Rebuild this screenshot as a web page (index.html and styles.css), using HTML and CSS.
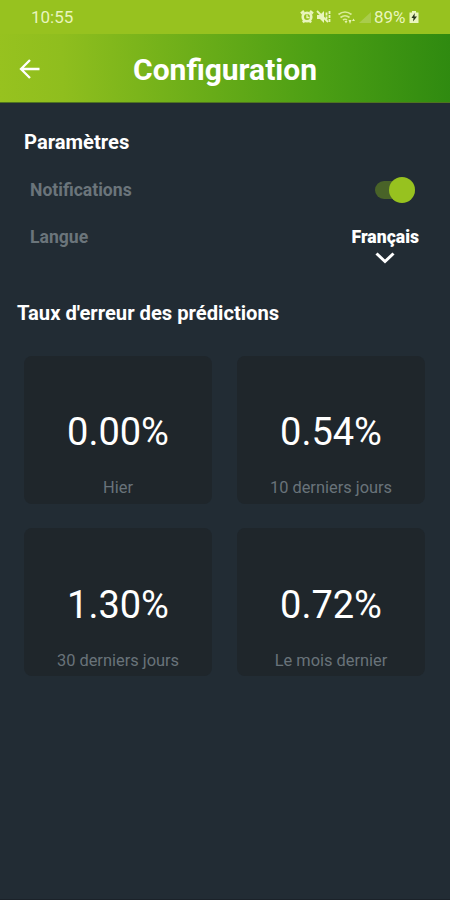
FILE: index.html
```
<!doctype html>
<html lang="fr">
<head>
<meta charset="utf-8">
<title>Configuration</title>
<link rel="stylesheet" href="styles.css">
</head>

<body>
<div class="status">
    <span class="time">10:55</span>
    <svg class="icons" width="72" height="16" viewBox="0 0 72 16">
        <!-- alarm -->
        <path d="M1 4.500L4 2M13 4.500L10 2M3 13.500l1.500-2M11 13.500l-1.500-2" stroke="#e9f5bd" stroke-width="2.400"/>
        <circle cx="7" cy="8" r="4.300" fill="none" stroke="#e9f5bd" stroke-width="2.600"/>
        <path d="M7 5.500V8.500H9.500" fill="none" stroke="#e9f5bd" stroke-width="1.300"/>
        <!-- mute -->
        <path d="M17 6h3l4-4v12l-4-4h-3z" fill="#e9f5bd"/>
        <path d="M17 2l11 11" stroke="#e9f5bd" stroke-width="1.800"/>
        <path d="M26.500 3.500v7M29.500 2v12" stroke="#e9f5bd" stroke-width="1.800" stroke-dasharray="3 1"/>
        <!-- wifi -->
        <path d="M38.500 5.500q6.500-5 13 0M40.500 8.500q4.500-3.500 9 0M43 11q2-1.500 4 0" fill="none" stroke="#d9ec98" stroke-width="1.700"/>
        <path d="M46 14.500l-1.500-2.500h3zM48.500 11l1.500 4 1.500-4zM52 12l1.500-2.500 1.500 2.500z" fill="#e4f2b0"/>
        <!-- signal -->
        <path d="M59 14L71 3v11z" fill="#a9cc4b"/>
    </svg>
    <span class="level">89%</span>
    <svg class="battery" width="10" height="14" viewBox="0 0 10 14">
        <path d="M1 2.500h2V1h4v1.500h2.500V13H.500V2.500z" fill="#e9f5bd"/>
        <path d="M5.800 3L2.500 8h2L4 11.500 8 6.500H5.500z" fill="#26351a"/>
    </svg>
</div>
<div class="header">
    <svg class="back" width="22" height="22" viewBox="0 0 22 22">
        <path d="M20.500 11H2.500M11 2L2 11l9 9" fill="none" stroke="#fff" stroke-width="2.300"/>
    </svg>
    <h1>Configuration</h1>
</div>
<div class="settings">
    <h2>Paramètres</h2>
    <div class="row">
        <span>Notifications</span>
        <div class="switch"><i></i></div>
    </div>
    <div class="row lang">
        <span>Langue</span>
        <div class="select">
            <b>Français</b>
            <svg width="20" height="12" viewBox="0 0 20 12">
                <path d="M1.500 1.500L10 9.500l8.500-8" fill="none" stroke="#fff" stroke-width="3"/>
            </svg>
        </div>
    </div>
</div>
<h2 class="rates">Taux d'erreur des prédictions</h2>
<ul class="cards">
    <li><p>0.00%</p><span>Hier</span></li>
    <li><p>0.54%</p><span>10 derniers jours</span></li>
    <li><p>1.30%</p><span>30 derniers jours</span></li>
    <li><p>0.72%</p><span>Le mois dernier</span></li>
</ul>
</body>
</html>
```

FILE: styles.css
```
* { padding: 0; margin: 0; box-sizing: border-box; }
li { list-style: none; }
svg { display: block; }
body{height:900px;background:#222c34;border-bottom:1px solid #1b2229;font-family:Roboto,sans-serif;color:#fff;overflow:hidden;}
.status{display:flex;align-items:center;height:34px;padding:0 31px;background:#97c21f;color:#e9f5bd;font-size:17px;line-height:34px;}
.status .time{flex:1;}
.status .icons{margin-right:2px;}
.status .level{width:33px;}
.status .battery{margin-left:2px;}
.header{display:flex;align-items:center;height:69px;padding:1px 0 0 19px;background:linear-gradient(88deg,#97c21f 0%,#8fbe1e 14%,#4c9f14 70%,#2f8a10 100%);border-bottom:1px solid #4f7420;}
.header h1{margin:2px 0 0 92px;font-size:30px;line-height:36px;}
.settings{height:179px;padding:27px 31px 0 24px;}
h2{font-size:20.200px;line-height:24px;}
.row{display:flex;justify-content:space-between;padding-left:6px;color:#6b757b;font-size:17.600px;font-weight:bold;line-height:24px;}
.settings h2 + .row{margin-top:24px;}
.lang{margin-top:23px;}
.switch{display:flex;justify-content:flex-end;align-items:center;width:40px;height:18px;margin:3px 4px 0 0;border-radius:9px;background:#496328;}
.switch i{width:26px;height:26px;border-radius:50%;background:#97c21f;}
.select{display:flex;flex-direction:column;align-items:center;color:#fff;}
.select svg{margin-top:3px;}
.rates{margin:19px 0 0 17px;}
.cards{display:grid;grid-template-columns:188px 188px;gap:24px 25px;padding:31px 24px;}
.cards li{height:148px;padding-top:52px;border-radius:8px;background:#1f262b;text-align:center;}
.cards li:nth-child(n+3){padding-top:53px;}
.cards p{font-size:38px;line-height:48px;}
.cards span{display:block;margin-top:22px;color:#69737a;font-size:16.400px;line-height:20px;}
```
